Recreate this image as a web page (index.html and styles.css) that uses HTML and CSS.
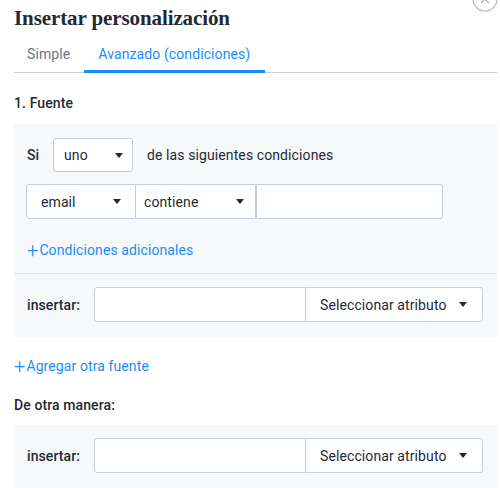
FILE: index.html
```html
<!DOCTYPE html>
<html lang="es">
<head>
<meta charset="utf-8">
<link rel="stylesheet" href="styles.css">
</head>
<body>
<div class="dialog">
  <button class="close" aria-label="Cerrar">
    <svg viewBox="0 0 26 26" width="26" height="26"><circle cx="13" cy="13" r="12" fill="#fff" stroke="#aeb6bf" stroke-width="1.2"/><path d="M9 9 L17 17 M17 9 L9 17" stroke="#aeb6bf" stroke-width="1.4"/></svg>
  </button>
  <h1 class="title">Insertar personalización</h1>
  <div class="tabs">
    <div class="tab">Simple</div>
    <div class="tab active">Avanzado (condiciones)</div>
  </div>

  <div class="section-label">1. Fuente</div>
  <div class="panel">
    <div class="panel-top">
      <div class="row-si">
        <span class="si">Si</span>
        <div class="select sel-uno"><span>uno</span><i class="caret"></i></div>
        <span class="cond-text">de las siguientes condiciones</span>
      </div>
      <div class="cond-group">
        <div class="select sel-email"><span>email</span><i class="caret"></i></div>
        <div class="select sel-contiene"><span>contiene</span><i class="caret"></i></div>
        <div class="input cond-input"></div>
      </div>
      <div class="link link-inner"><span class="plus">+</span>Condiciones adicionales</div>
    </div>
    <div class="panel-bottom">
      <div class="insert-row">
        <span class="insert-label">insertar:</span>
        <div class="insert-group">
          <div class="input insert-input"></div>
          <div class="select sel-attr"><span>Seleccionar atributo</span><i class="caret"></i></div>
        </div>
      </div>
    </div>
  </div>

  <div class="link link-outer"><span class="plus">+</span>Agregar otra fuente</div>

  <div class="section-label other">De otra manera:</div>
  <div class="panel panel-2">
    <div class="panel-bottom">
      <div class="insert-row">
        <span class="insert-label">insertar:</span>
        <div class="insert-group">
          <div class="input insert-input"></div>
          <div class="select sel-attr"><span>Seleccionar atributo</span><i class="caret"></i></div>
        </div>
      </div>
    </div>
  </div>
</div>
</body>
</html>
```

FILE: styles.css
```css
* { box-sizing: border-box; }
html, body { margin: 0; padding: 0; background: #fff; }
body {
  font-family: Roboto, "Liberation Sans", Arial, sans-serif;
  font-size: 14px;
  letter-spacing: 0.1px;
  color: #1f2a36;
  overflow: hidden;
}
.dialog {
  position: relative;
  padding: 0 3px 0 14px;
  width: 500px;
}
.close {
  position: absolute;
  top: -18px;
  right: 2px;
  padding: 0;
  border: 0;
  background: none;
  width: 26px;
  height: 26px;
}
.close svg { display: block; }
.title {
  font-family: "Liberation Serif", "Times New Roman", serif;
  font-weight: 700;
  font-size: 21px;
  letter-spacing: -0.1px;
  line-height: 28px;
  margin: 4px 0 0 0;
  color: #1f2a36;
}
.tabs {
  display: flex;
  margin-top: 8px;
  border-bottom: 1px solid #c6ced6;
}
.tab {
  padding: 0 14px;
  height: 33px;
  line-height: 28px;
  color: #6b7581;
  font-size: 14px;
  border-bottom: 3px solid transparent;
  margin-bottom: -1px;
}
.tab:first-child { padding: 0 14px 0 13px; }
.tab.active {
  color: #1a8ef5;
  border-bottom-color: #1a8ef5;
  padding: 0 15px 0 14px;
}
.section-label {
  font-weight: 500;
  font-size: 14px;
  line-height: 18px;
  margin-top: 21px;
  color: #1f2a36;
}
.section-label.other { margin-top: 21px; }
.panel {
  background: #f6f8fa;
  margin-top: 12px;
}
.panel-2 { margin-top: 11px; }
.panel-top {
  padding: 14px 14px 14px 12px;
  border-bottom: 1px solid #e1e5ea;
}
.row-si {
  display: flex;
  align-items: center;
  padding-left: 1px;
}
.si { font-weight: 500; width: 26px; }
.cond-text { margin-left: 14px; }
.select {
  display: flex;
  align-items: center;
  justify-content: space-between;
  height: 35px;
  background: #fff;
  border: 1px solid #c6ced8;
  color: #1f2a36;
}
.caret {
  width: 0; height: 0;
  border-left: 4px solid transparent;
  border-right: 4px solid transparent;
  border-top: 5px solid #1f2a36;
}
.sel-uno {
  width: 80px;
  height: 34px;
  border-radius: 3px;
  padding: 0 9px 0 10px;
}
.cond-group {
  display: flex;
  margin-top: 12px;
}
.sel-email {
  width: 110px;
  padding: 0 14px 0 14px;
  border-radius: 3px 0 0 3px;
}
.sel-contiene {
  width: 120px;
  padding: 0 11px 0 8px;
  border-left: 0;
}
.input {
  height: 35px;
  background: #fff;
  border: 1px solid #c6ced8;
}
.cond-input {
  width: 187px;
  border-radius: 0 3px 3px 0;
}
.link {
  color: #1a8ef5;
  display: flex;
  align-items: center;
}
.plus {
  font-size: 20px;
  line-height: 18px;
  font-weight: 300;
  margin-right: 1px;
}
.link-inner {
  margin-top: 22px;
  padding-left: 1px;
  height: 18px;
}
.panel-bottom {
  padding: 13px 14px 15px 13px;
}
.insert-row {
  display: flex;
  align-items: center;
}
.insert-label {
  font-weight: 500;
  width: 68px;
}
.insert-group { display: flex; }
.insert-input {
  width: 212px;
  border-radius: 3px 0 0 3px;
}
.sel-attr {
  width: 177px;
  border-left: 0;
  border-radius: 0 3px 3px 0;
  padding: 0 15px 0 14px;
}
.link-outer {
  margin-top: 20px;
  height: 18px;
}
```
